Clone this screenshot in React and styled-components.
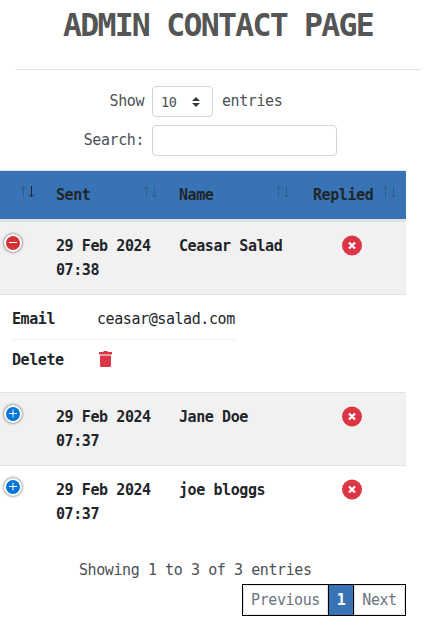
import React from "react";
import styled, { createGlobalStyle } from "styled-components";

const Global = createGlobalStyle`
  *, *::before, *::after { box-sizing: border-box; }
  body {
    margin: 0;
    background: #fff;
    color: #212529;
    font: 15px/24px "DejaVu Sans Mono", monospace;
    letter-spacing: -0.42px;
    overflow: hidden;
  }
`;

const Page = styled.main`
  width: 428px;
  height: 638px;
  overflow: hidden;
`;

const Title = styled.h1`
  margin: 0 0 0 15px;
  width: 406px;
  height: 69px;
  padding-top: 5px;
  text-align: center;
  font-size: 31.5px;
  line-height: 40px;
  letter-spacing: -1.74px;
  color: #555;
`;

const Rule = styled.hr`
  width: 406px;
  margin: 0 0 16px 15px;
  border: 0;
  border-top: 1px solid #e3e3e3;
`;

const Field = styled.label`
  display: grid;
  grid-template-columns: 144px auto 1fr;
  column-gap: 8px;
  align-items: center;
  height: 31px;
  margin-bottom: 8px;
  color: #4c5054;
`;

const FieldText = styled.span`
  text-align: ${(p) => (p.$end ? "right" : "left")};
  padding-left: ${(p) => (p.$end ? 0 : 1)}px;
  padding-bottom: 1px;
`;

const Select = styled.span`
  display: flex;
  align-items: center;
  justify-content: space-between;
  width: 61px;
  height: 31px;
  padding: 0 12px 0 8px;
  border: 1px solid #ced4da;
  border-radius: 4px;
  font-size: 13.5px;
`;

const Input = styled.input`
  width: 185px;
  height: 31px;
  border: 1px solid #ced4da;
  border-radius: 4px;
  background: #fff;
`;

const Table = styled.section`
  width: 406px;
  margin-top: 14px;
  font-weight: 700;
`;

const Row = styled.div`
  display: grid;
  grid-template-columns: 44px 123px 132px 107px;
  height: 73px;
  padding-top: 12px;
  border-top: 1px solid #dee2e6;
  background: ${(p) => (p.$striped ? "#f1f1f1" : "#fff")};
`;

const HeaderRow = styled(Row)`
  height: 51px;
  border-bottom: 2px solid #dee2e6;
  background: #3874b5;
`;

const HeadCell = styled.div`
  display: flex;
  justify-content: space-between;
  padding: 0 8px 0 ${(p) => p.$left ?? 12}px;
`;

const Cell = styled.div`
  padding-left: 12px;
`;

const IconCell = styled.div`
  display: flex;
  justify-content: ${(p) => (p.$center ? "center" : "flex-start")};
  padding: 0 ${(p) => (p.$center ? "1px 0 0" : "0 0 4px")};
`;

const Toggle = styled.span`
  display: block;
  width: 18px;
  height: 18px;
  border: 2px solid #fff;
  border-radius: 50%;
  background: ${(p) => (p.$open ? "#d33333" : "#0275d8")};
  box-shadow: 0 0 3px #444;
`;

const Glyph = styled.svg`
  display: block;
`;

const SortGlyph = styled(Glyph)`
  margin-top: 2px;
`;

const Details = styled.div`
  height: 98px;
  padding: 0 12px;
  border-top: 1px solid #dee2e6;
  background: #fff;
  font-weight: 400;
`;

const DetailRow = styled.div`
  display: grid;
  grid-template-columns: 85px auto;
  align-items: center;
  width: 223px;
  height: ${(p) => (p.$last ? 39 : 45)}px;
  padding-top: ${(p) => (p.$last ? 0 : 4)}px;
  border-bottom: ${(p) => (p.$last ? 0 : 1)}px solid #efefef;
`;

const Label = styled.strong``;

const Summary = styled.p`
  margin: 20px 0 2px 79px;
  color: #4c5054;
`;

const Pager = styled.nav`
  display: flex;
  width: 164px;
  height: 32px;
  margin-left: 242px;
  border: 1px solid #000;
`;

const PageButton = styled.span`
  display: flex;
  align-items: center;
  justify-content: center;
  width: ${(p) => p.$width}px;
  border: 1px solid ${(p) => (p.$active ? "#3874b5" : "#dee2e6")};
  border-radius: ${(p) => p.$radius ?? "0"};
  background: ${(p) => (p.$active ? "#3874b5" : "#fff")};
  color: ${(p) => (p.$active ? "#fff" : "#6c757d")};
  font-weight: ${(p) => (p.$active ? 700 : 400)};
`;

const PageItem = styled.span`
  display: flex;
  border-right: ${(p) => (p.$last ? 0 : 1)}px solid #000;
`;

const Sort = ({ desc }) => (
  <SortGlyph width="16" height="14" viewBox="0 0 16 14" fill="none" stroke="#212529">
    <path d="M3.5 12.5V1.5M1 4L3.5 1.5 6 4" opacity=".3" />
    <path d="M11.5 1V12M9 9.5L11.5 12 14 9.5" opacity={desc ? 1 : 0.3} />
  </SortGlyph>
);

const Mark = ({ open }) => (
  <Glyph width="14" height="14" viewBox="0 0 14 14" stroke="#fff" strokeWidth="1">
    <path d={open ? "M3 6.5H11" : "M3 6.5H11M7 2.5V10.5"} />
  </Glyph>
);

const Cross = () => (
  <Glyph width="20" height="24" viewBox="0 0 20 24">
    <circle cx="10" cy="11.5" r="10" fill="#dc3545" />
    <path d="M7 8.5l6 6M13 8.5l-6 6" stroke="#fff" strokeWidth="2.2" />
  </Glyph>
);

const Trash = () => (
  <Glyph width="18" height="18" viewBox="0 0 18 18" fill="#dc3545">
    <path d="M3 4.5H14V14.5Q14 16 12.5 16H4.5Q3 16 3 14.5ZM2 1H6L7 0H10L11 1H15V3.5H2Z" />
  </Glyph>
);

const Entry = ({ time, name, open, striped }) => (
  <Row $striped={striped}>
    <IconCell>
      <Toggle $open={open}><Mark open={open} /></Toggle>
    </IconCell>
    <Cell>29 Feb 2024<br />{time}</Cell>
    <Cell>{name}</Cell>
    <IconCell $center><Cross /></IconCell>
  </Row>
);

export default function App() {
  return (
    <Page>
      <Global />
      <Title>ADMIN CONTACT PAGE</Title>
      <Rule />
      <Field as="div">
        <FieldText $end>Show</FieldText>
        <Select>
          10
          <Glyph width="8" height="10" viewBox="0 0 8 10" fill="#343a40">
            <path d="M0 4L4 0 8 4ZM0 6L4 10 8 6Z" />
          </Glyph>
        </Select>
        <FieldText>entries</FieldText>
      </Field>
      <Field>
        <FieldText $end>Search:</FieldText>
        <Input type="search" />
      </Field>
      <Table>
        <HeaderRow>
          <HeadCell $left={20}><Sort desc /></HeadCell>
          <HeadCell>Sent<Sort /></HeadCell>
          <HeadCell>Name<Sort /></HeadCell>
          <HeadCell $left={14}>Replied<Sort /></HeadCell>
        </HeaderRow>
        <Entry time="07:38" name="Ceasar Salad" open striped />
        <Details>
          <DetailRow>
            <Label>Email</Label>
            <span>ceasar@salad.com</span>
          </DetailRow>
          <DetailRow $last>
            <Label>Delete</Label>
            <Trash />
          </DetailRow>
        </Details>
        <Entry time="07:37" name="Jane Doe" striped />
        <Entry time="07:37" name="joe bloggs" />
      </Table>
      <Summary>Showing 1 to 3 of 3 entries</Summary>
      <Pager>
        <PageItem><PageButton $width={85} $radius="4px 0 0 4px">Previous</PageButton></PageItem>
        <PageItem><PageButton $width={24} $active>1</PageButton></PageItem>
        <PageItem $last><PageButton $width={51} $radius="0 4px 4px 0">Next</PageButton></PageItem>
      </Pager>
    </Page>
  );
}
